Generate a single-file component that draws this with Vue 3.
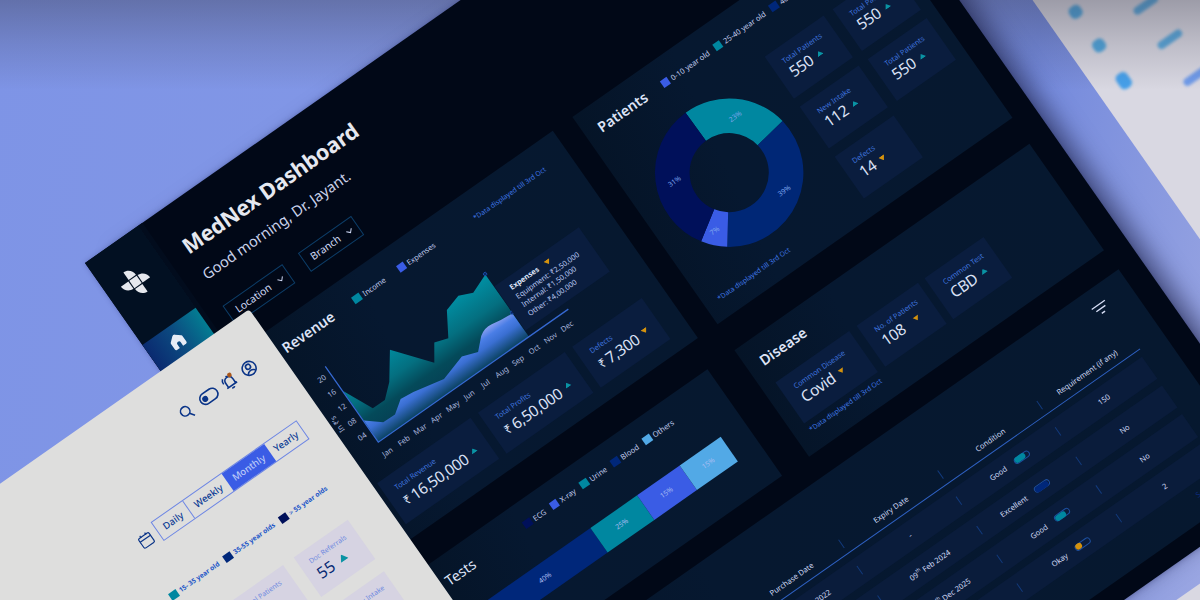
<script setup>
const dataNote = '*Data displayed till 3rd Oct'

const yTicks = ['20', '16', '12', '08', '04']
const months = ['Jan', 'Feb', 'Mar', 'Apr', 'May', 'Jun', 'Jul', 'Aug', 'Sep', 'Oct', 'Nov', 'Dec']

const revenueStats = [
  { label: 'Total Revenue', value: '16,50,000', trend: 'up', size: 'lg' },
  { label: 'Total Profits', value: '6,50,000', trend: 'up', size: 'md' },
  { label: 'Defects', value: '7,300', trend: 'down', size: 'sm' },
]

const patientLegend = [
  { label: '0-10 year old', color: 'blue' },
  { label: '25-40 year old', color: 'teal' },
  { label: '40-55 year old', color: 'royal' },
]

const patientStats = [
  { label: 'Total Patients', value: '550', trend: 'up' },
  { label: 'Total Patients', value: '550', trend: 'up' },
  { label: 'New Intake', value: '112', trend: 'up' },
  { label: 'Total Patients', value: '550', trend: 'up' },
  { label: 'Defects', value: '14', trend: 'down' },
]

const diseaseStats = [
  { label: 'Common Disease', value: 'Covid', trend: 'down', size: 'a' },
  { label: 'No. of Patients', value: '108', trend: 'down', size: 'b' },
  { label: 'Common Test', value: 'CBD', trend: 'up', size: 'c' },
]

const testLegend = [
  { label: 'ECG', color: 'navy' },
  { label: 'X-ray', color: 'blue' },
  { label: 'Urine', color: 'teal' },
  { label: 'Blood', color: 'royal' },
  { label: 'Others', color: 'sky' },
]

const testBar = [
  { value: '40%', width: 130.5, color: 'royal' },
  { value: '25%', width: 57, color: 'teal' },
  { value: '15%', width: 52.5, color: 'blue' },
  { value: '15%', width: 49.5, color: 'sky' },
]

const tableHead = ['Purchase Date', 'Expiry Date', 'Condition', 'Requirement (if any)']
const tableRows = [
  { bought: 'Mar 2022', day: '12', expiry: '-', expiryDay: '', condition: 'Good', level: 80, color: 'teal', need: '150' },
  { bought: '', day: '', expiry: 'Feb 2024', expiryDay: '09', condition: 'Excellent', level: 100, color: 'royal', need: 'No' },
  { bought: '', day: '', expiry: 'Dec 2025', expiryDay: '10', condition: 'Good', level: 80, color: 'teal', need: 'No' },
  { bought: '', day: '', expiry: '', expiryDay: '', condition: 'Okay', level: 45, color: 'amber', need: '2' },
]

// donut slices, degrees clockwise from the top
const slices = [
  { from: -1, to: 81, color: 'teal', label: '23%', x: 37.2, y: -42.7 },
  { from: 81, to: 216.5, color: 'royal', label: '39%', x: 34.7, y: 46.3 },
  { from: 216.5, to: 237.2, color: 'blue', label: '7%', x: -45.3, y: 39.1 },
  { from: 237.2, to: 359, color: 'navy', label: '31%', x: -49.8, y: -24.3 },
]

function point(r, deg) {
  const a = (deg * Math.PI) / 180
  return `${(r * Math.sin(a)).toFixed(2)} ${(-r * Math.cos(a)).toFixed(2)}`
}

function slicePath({ from, to }) {
  const outer = 74.2
  const inner = 39.6
  const large = to - from > 180 ? 1 : 0
  return `M${point(outer, from)}A${outer} ${outer} 0 ${large} 1 ${point(outer, to)}L${point(inner, to)}A${inner} ${inner} 0 ${large} 0 ${point(inner, from)}Z`
}

const ranges = ['Daily', 'Weekly', 'Monthly', 'Yearly']
const ageLegend = [
  { label: '15- 35 year old', color: 'teal' },
  { label: '35-55 year olds', color: 'royal' },
  { label: '> 55 year olds', color: 'navy' },
]
</script>

<template>
  <div class="scene">
    <div class="plane">
      <div class="sheet sheet--right">
        <div class="sheet__dots"><i></i><i></i><i></i></div>
        <div class="sheet__dashes"><i></i><i></i><i></i></div>
      </div>
      <div class="sheet sheet--bottom"></div>
    </div>
    <div class="shade"></div>

    <div class="plane">
      <div class="dashboard">
        <aside class="sidebar">
          <svg class="sidebar__logo" viewBox="-16 -16 32 32">
            <g fill="#e6e8ee">
              <rect x="-4.6" y="-4.6" width="9.2" height="9.2" />
              <path d="M-4.6-5.8V-15.2C0.5-15.200 4.600-11 4.600-5.800Z" />
              <path d="M5.800 4.600H15.200C15.200-0.500 11-4.600 5.800-4.600Z" />
              <path d="M4.600 5.800V15.200C-0.500 15.200-4.600 11-4.600 5.800Z" />
              <path d="M-5.800-4.600H-15.200C-15.200 0.500-11 4.600-5.800 4.600Z" />
            </g>
          </svg>
          <div class="sidebar__home">
            <svg viewBox="0 0 18 18" width="18" height="18">
              <path d="M7.500 2.200Q9 1 10.500 2.200L15.500 6.500Q16 7 16 8V14.500Q16 16 14.500 16H11V11.500Q11 9.800 9 9.800Q7 9.800 7 11.500V16H3.500Q2 16 2 14.500V8Q2 7 2.500 6.500Z" fill="#e6ebf5" />
            </svg>
          </div>
        </aside>

        <main class="main">
          <h1 class="title">MedNex Dashboard</h1>
          <p class="greeting">Good morning, Dr. Jayant.</p>
          <div class="filters">
            <div class="select">
              Location
              <svg viewBox="0 0 8 6" width="8" height="6"><path d="M1 1.200L4 4.400L7 1.200" /></svg>
            </div>
            <div class="select">
              Branch
              <svg viewBox="0 0 8 6" width="8" height="6"><path d="M1 1.200L4 4.400L7 1.200" /></svg>
            </div>
          </div>

          <div class="row row--top">
            <section class="card card--revenue">
              <header class="card__head">
                <h2>Revenue</h2>
                <ul class="legend legend--wide">
                  <li><i class="bg-teal"></i>Income</li>
                  <li><i class="bg-blue"></i>Expenses</li>
                </ul>
                <span class="note">{{ dataNote }}</span>
              </header>
              <div class="chart">
                <svg viewBox="98 200 361 140" width="361" height="140">
                  <defs>
                    <linearGradient id="income" x1="0" y1="0" x2="0" y2="1">
                      <stop offset="0" stop-color="#0090a4" />
                      <stop offset="0.4" stop-color="#046f80" />
                      <stop offset="0.65" stop-color="#044a5a" />
                      <stop offset="1" stop-color="#063a50" />
                    </linearGradient>
                    <linearGradient id="expense" x1="0" y1="0" x2="0" y2="1">
                      <stop offset="0" stop-color="#8aa0f0" />
                      <stop offset="0.25" stop-color="#4a7ee6" />
                      <stop offset="0.5" stop-color="#3a6fd2" />
                      <stop offset="1" stop-color="#0a4260" />
                    </linearGradient>
                  </defs>
                  <path
                    d="M138 253L152.500 284L167 284.300L181 272L200 246L229 282L240.500 265.500L254.500 270L269.500 246L287 241L301 247L321.400 239V315H138Z"
                    fill="url(#income)"
                  />
                  <path
                    d="M138 289L153 301.500L167 302L180.500 292.500L195 294L227.500 301L255 292.800L271 298.300L282.700 287Q290 282 298 283.500Q310 286 321.200 286.300V315H138Z"
                    fill="url(#expense)"
                  />
                  <path d="M137.500 222.500V315H369.500" fill="none" stroke="#3568d0" stroke-width="1.3" />
                  <circle cx="321.400" cy="238.500" r="1.700" class="dot" />
                  <circle cx="321.400" cy="285.500" r="1.700" class="dot" />
                  <g class="axis">
                    <text v-for="(t, i) in yTicks" :key="t" x="127.500" :y="233.300 + i * 17.600">{{ t }}</text>
                    <text v-for="(m, i) in months" :key="m" :x="139.500 + i * 19.900" y="331">{{ m }}</text>
                    <text transform="translate(117 277) rotate(-90)">In ₹’s</text>
                  </g>
                </svg>
                <div class="tooltip">
                  <b>Expenses <i class="arrow arrow--down"></i></b>
                  <span>Equipment: ₹2,50,000</span>
                  <span>Internal: ₹1,50,000</span>
                  <span>Other: ₹4,00,000</span>
                </div>
              </div>
              <div class="stats stats--revenue">
                <div v-for="s in revenueStats" :key="s.label" class="stat" :class="'stat--' + s.size">
                  <span class="stat__label">{{ s.label }}</span>
                  <span class="stat__value"><small>₹</small>{{ s.value }}<i class="arrow" :class="'arrow--' + s.trend"></i></span>
                </div>
              </div>
            </section>

            <section class="card card--patients">
              <header class="card__head">
                <h2>Patients</h2>
                <ul class="legend legend--ages">
                  <li v-for="l in patientLegend" :key="l.label"><i :class="'bg-' + l.color"></i>{{ l.label }}</li>
                </ul>
              </header>
              <div class="patients">
                <svg class="donut" viewBox="-74.500 -74.500 149 149" width="149" height="149">
                  <path v-for="s in slices" :key="s.label" :d="slicePath(s)" :class="'fill-' + s.color" />
                  <text v-for="s in slices" :key="s.label" :x="s.x" :y="s.y + 2.500">{{ s.label }}</text>
                </svg>
                <div class="stats stats--patients">
                  <div v-for="(s, i) in patientStats" :key="i" class="stat">
                    <span class="stat__label">{{ s.label }}</span>
                    <span class="stat__value">{{ s.value }}<i class="arrow" :class="'arrow--' + s.trend"></i></span>
                  </div>
                </div>
              </div>
              <p class="note note--patients">{{ dataNote }}</p>
            </section>
          </div>

          <div class="row row--middle">
            <section class="card card--tests">
              <header class="card__head">
                <h2>Tests</h2>
                <ul class="legend legend--tests">
                  <li v-for="l in testLegend" :key="l.label"><i :class="'bg-' + l.color"></i>{{ l.label }}</li>
                </ul>
              </header>
              <div class="bar">
                <span v-for="(b, i) in testBar" :key="i" :class="'bg-' + b.color" :style="{ width: b.width + 'px' }">{{ b.value }}</span>
              </div>
            </section>

            <section class="card card--disease">
              <header class="card__head">
                <h2>Disease</h2>
              </header>
              <div class="stats stats--disease">
                <div v-for="s in diseaseStats" :key="s.label" class="stat" :class="'stat--' + s.size">
                  <span class="stat__label">{{ s.label }}</span>
                  <span class="stat__value">{{ s.value }}<i class="arrow" :class="'arrow--' + s.trend"></i></span>
                </div>
              </div>
              <p class="note note--disease">{{ dataNote }}</p>
            </section>
          </div>

          <section class="card card--table">
            <svg class="sort" viewBox="0 0 18 12" width="18" height="12">
              <path d="M1 1.500H17M3.500 6H14.500M7 10.500H11" />
            </svg>
            <div class="table__row table__row--head">
              <span v-for="h in tableHead" :key="h" class="cell">{{ h }}</span>
            </div>
            <div v-for="(r, i) in tableRows" :key="i" class="table__row">
              <span class="cell"><template v-if="r.bought">{{ r.day }}<sup>th</sup>&nbsp;{{ r.bought }}</template></span>
              <span class="cell">{{ r.expiryDay }}<sup v-if="r.expiryDay">th</sup>&nbsp;{{ r.expiry }}</span>
              <span class="cell cell--condition">
                <em>{{ r.condition }}</em>
                <span class="pill"><i :class="'bg-' + r.color" :style="{ width: r.level + '%' }"></i></span>
              </span>
              <span class="cell">{{ r.need }}</span>
            </div>
            <a class="more">See all</a>
          </section>
        </main>
      </div>

      <div class="panel">
        <div class="panel__icons">
          <svg viewBox="0 0 18 18" width="18" height="18">
            <circle cx="7" cy="8" r="4.700" />
            <path d="M9.500 12L12.800 16.800" />
          </svg>
          <svg viewBox="0 0 22 18" width="22" height="18">
            <rect x="1.200" y="3.500" width="19.600" height="11.500" rx="5.700" />
            <circle cx="6.500" cy="9.300" r="2.200" class="solid" />
          </svg>
          <svg viewBox="0 0 18 18" width="18" height="18">
            <path d="M2.500 13.500H14.500M4.200 13.500V8.500C4.200 5.500 6 4 8.500 4S12.800 5.500 12.800 8.500V13.500M8.500 4V2.200M7 15.700Q8.500 17 10 15.700M2 8Q2 4.500 4 3" />
            <circle cx="12" cy="3.600" r="2.300" class="alert" />
          </svg>
          <svg viewBox="0 0 18 18" width="18" height="18">
            <circle cx="8" cy="9.500" r="7" />
            <circle cx="8" cy="7.500" r="2.500" />
            <path d="M3.500 14.300Q8 9.500 12.500 14.300" />
          </svg>
        </div>
        <div class="panel__range">
          <svg viewBox="0 0 16 16" width="16" height="16">
            <rect x="1" y="2.800" width="12.500" height="11.500" rx="1.500" />
            <path d="M1 6.500H13.500M4.300 1V3.500M10.200 1V3.500" />
          </svg>
          <div class="tabs">
            <span v-for="r in ranges" :key="r" :class="['tab', 'tab--' + r.toLowerCase()]">{{ r }}</span>
          </div>
        </div>
        <ul class="legend legend--panel">
          <li v-for="l in ageLegend" :key="l.label"><i :class="'bg-' + l.color"></i>{{ l.label }}</li>
        </ul>
        <div class="tiles">
          <div class="tile"><span>Total Patients</span><b>55<i class="arrow arrow--up"></i></b></div>
          <div class="tile"><span>Doc Referrals</span><b>55<i class="arrow arrow--up"></i></b></div>
          <div class="tile tile--intake"><span>New Intake</span></div>
        </div>
      </div>
    </div>
  </div>
</template>

<style>
body {
  margin: 0;
}
</style>

<style scoped>
.scene {
  position: relative;
  width: 1200px;
  height: 600px;
  overflow: hidden;
  background: linear-gradient(100deg, #7e94e6 0%, #8297e6 35%, #7389dc 80%, #9aa6e2 100%);
  font-family: "Noto Sans", "Open Sans", sans-serif;
  color: #cfd8f4;
}

/* darkening along the top edge, behind the windows */
.shade {
  position: absolute;
  inset: 0 0 auto;
  height: 90px;
  background: linear-gradient(rgba(50, 50, 66, 0.36), rgba(50, 50, 66, 0.16) 50%, rgba(50, 50, 66, 0));
}

.plane {
  position: absolute;
  left: 85px;
  top: 263px;
  width: 0;
  height: 0;
  transform: rotate(-35deg);
}

h1,
h2,
p,
ul {
  margin: 0;
  padding: 0;
  list-style: none;
}

/* sheets behind the dashboard */
.sheet {
  position: absolute;
  background: #d9d8e2;
}

.sheet--right {
  left: 927px;
  top: 200px;
  width: 500px;
  height: 600px;
  display: flex;
}

.sheet--bottom {
  left: 700px;
  top: 902px;
  width: 400px;
  height: 200px;
}

.sheet__dots,
.sheet__dashes {
  display: flex;
  flex-direction: column;
  gap: 28px;
  padding: 156px 0 0 22px;
  filter: blur(1.5px);
}

.sheet__dots i {
  width: 13px;
  height: 13px;
  border-radius: 5px;
  background: #4fa5dc;
}

.sheet__dots i:last-child {
  height: 17px;
  background: #46a0ea;
}

.sheet__dashes {
  gap: 34px;
  padding: 193px 0 0 41px;
}

.sheet__dashes i {
  width: 28px;
  height: 8px;
  border-radius: 4px;
  background: #5aa8dc;
}

.sheet__dashes i:last-child {
  margin-top: 3px;
  background: #6f9bea;
}

/* dashboard window */
.dashboard {
  position: absolute;
  left: 0;
  top: 0;
  width: 867px;
  height: 872px;
  display: flex;
  background: #010817;
  box-shadow: 20px 4px 22px -10px rgba(30, 34, 70, 0.6), 0 0 5px rgba(40, 46, 110, 0.35);
}

.sidebar {
  width: 70px;
  box-sizing: border-box;
  padding-top: 29px;
  background: linear-gradient(90deg, #021022 0 65px, #020c1d 65px);
}

.sidebar__logo {
  display: block;
  width: 31px;
  height: 31px;
  margin-left: 15px;
}

.sidebar__home {
  width: 65px;
  height: 34px;
  margin-top: 40px;
  display: flex;
  align-items: center;
  justify-content: center;
  box-sizing: border-box;
  padding-right: 4px;
  background: linear-gradient(90deg, #0a2a70, #0c4a80 50%, #037c92);
}

.main {
  flex: 1;
  padding: 30px 24px 0 0;
}

.title {
  margin-left: 20px;
  font-size: 21.6px;
  line-height: 30px;
  font-weight: 700;
  letter-spacing: -0.15px;
  color: #e6e8f0;
  white-space: nowrap;
}

.greeting {
  margin: 8px 0 0 20px;
  font-size: 14.7px;
  line-height: 20px;
  color: #c9d1ea;
}

.filters {
  display: flex;
  gap: 19px;
  margin: 26px 0 23px 18px;
}

.select {
  display: flex;
  align-items: center;
  gap: 8px;
  height: 21px;
  padding: 0 5px 0 8px;
  border: 1px solid #0c3c66;
  font-size: 10.4px;
  line-height: 21px;
}

.select svg {
  fill: none;
  stroke: #cfd8f4;
  stroke-width: 1;
}

.row {
  display: flex;
  margin-left: 28px;
}

.row--top {
  height: 252.5px;
  gap: 24px;
}

.row--middle {
  height: 130px;
  margin-top: 31.5px;
  gap: 33.5px;
}

.card {
  flex: none;
  box-sizing: border-box;
  background: linear-gradient(100deg, #051427, #061830 30%, #06182f);
}

.card--revenue {
  width: 361px;
}

.card--patients,
.card--disease {
  width: 360px;
}

.card--tests {
  width: 350.5px;
}

.card__head {
  display: flex;
  align-items: center;
  padding: 15px 0 0 15px;
  height: 20px;
}

.card__head h2 {
  font-size: 14.4px;
  line-height: 20px;
  font-weight: 600;
  color: #dde3f6;
}

.card--tests h2 {
  font-weight: 400;
}

.legend {
  display: flex;
  font-size: 7.5px;
  line-height: 10px;
  color: #c3cdee;
  white-space: nowrap;
}

.legend li {
  display: flex;
  align-items: center;
  gap: 3px;
}

.legend i {
  width: 8.5px;
  height: 8px;
}

.legend--wide {
  gap: 16px;
  margin-left: 25px;
}

.legend--ages {
  gap: 7px;
  margin-left: 19px;
}

.legend--tests {
  gap: 7px;
  margin: -4px 0 0 62px;
}

.note {
  font-size: 6.9px;
  line-height: 10px;
  color: #3f76e4;
  white-space: nowrap;
}

.card--revenue .note {
  margin: 3px 28px 0 auto;
}

.note--patients {
  margin: -6px 0 0 15px;
}

.note--disease {
  margin: 4px 0 0 16px;
}

.bg-teal {
  background: #0087a0;
}

.bg-blue {
  background: #3a5ce5;
}

.bg-navy {
  background: #00105a;
}

.bg-royal {
  background: #00277a;
}

.bg-sky {
  background: #52a9e6;
}

.bg-amber {
  background: #d4920e;
}

.fill-teal {
  fill: #0087a0;
}

.fill-royal {
  fill: #002776;
}

.fill-blue {
  fill: #3a5ce5;
}

.fill-navy {
  fill: #00105a;
}

/* revenue chart */
.chart {
  position: relative;
  height: 140px;
  margin-top: 5px;
}

.chart svg {
  display: block;
}

.axis text {
  font-size: 7.6px;
  text-anchor: middle;
  fill: #a9b6de;
}

.dot {
  fill: #0a2a66;
  stroke: #1f52b8;
  stroke-width: 0.8;
}

.tooltip {
  position: absolute;
  left: 224px;
  top: 54px;
  width: 103px;
  height: 54px;
  box-sizing: border-box;
  padding: 4px 0 0 12px;
  background: #0a1d3e;
  display: flex;
  flex-direction: column;
  font-size: 7.4px;
  line-height: 10.4px;
  color: #b9c6f0;
  white-space: nowrap;
}

.tooltip b {
  font-weight: 700;
  color: #dde3f6;
  line-height: 12px;
}

.tooltip .arrow {
  margin-left: 6px;
}

.arrow {
  display: inline-block;
  width: 7px;
  height: 5px;
  background: #0a93a4;
  clip-path: polygon(50% 0, 100% 100%, 0 100%);
}

.arrow--down {
  background: #d4920e;
  clip-path: polygon(0 0, 100% 0, 50% 100%);
}

.stats {
  display: flex;
}

.stat {
  box-sizing: border-box;
  padding: 9px 0 0 12px;
  background: #0a1d3e;
  display: flex;
  flex-direction: column;
  white-space: nowrap;
}

.stat__label {
  font-size: 7.4px;
  line-height: 10px;
  color: #3f73dd;
}

.stat__value {
  display: flex;
  align-items: center;
  margin-top: 1px;
  font-size: 15.5px;
  line-height: 17px;
  letter-spacing: -0.4px;
  color: #dbe1f5;
}

.stat__value small {
  font-size: 12px;
  margin-right: 3px;
}

.stat__value .arrow {
  margin: 0 0 0 6px;
}

.stats--revenue {
  gap: 9.5px;
  margin: 8px 0 0 15px;
}

.stats--revenue .stat {
  height: 49.5px;
}

.stats--revenue .stat__value {
  margin-top: 2.5px;
}

.stats--revenue .arrow {
  margin-top: -3px;
}

.stat--lg {
  width: 113.5px;
}

.stat--md {
  width: 105.5px;
}

.stat--sm {
  width: 84.5px;
}

.patients {
  display: flex;
  gap: 21px;
  margin: 26px 0 0 22px;
}

.donut text {
  font-size: 7px;
  text-anchor: middle;
  fill: #7fa6ee;
}

.stats--patients {
  display: grid;
  grid-template-columns: 72px 72px;
  grid-auto-rows: 51px;
  gap: 10px 10.5px;
}

.stats--disease {
  gap: 8.5px;
  margin: 14.5px 0 0 15px;
}

.stats--disease .stat {
  height: 50.5px;
  padding-left: 13px;
}

.stat--a {
  width: 90px;
}

.stat--b {
  width: 75px;
}

.stats--disease .stat--b .arrow {
  margin-left: 12px;
}

.stat--c {
  width: 72px;
}

.bar {
  display: flex;
  height: 30px;
  margin: 27.5px 0 0 33px;
}

.bar span {
  display: flex;
  align-items: center;
  justify-content: center;
  font-size: 7px;
  color: #a9bdf2;
}

/* equipment table */
.card--table {
  width: 745px;
  height: 254px;
  margin: 24px 0 0 28px;
  padding: 16px 0 0 14px;
  font-size: 7.6px;
}

.sort {
  display: block;
  margin: 0 0 0 685px;
  fill: none;
  stroke: #d5dcf4;
  stroke-width: 1.4;
}

.table__row {
  display: grid;
  grid-template-columns: 121.3px 121.3px 121.3px 1fr;
  width: 699.5px;
  height: 27.5px;
  box-sizing: border-box;
  padding-left: 225.3px;
  margin-bottom: 7.8px;
  align-items: center;
  background: #0a1c3b;
}

.table__row--head {
  width: 703px;
  height: 21.5px;
  margin: 28px 0 7px;
  background: none;
  border-bottom: 1.5px solid #2f62c4;
}

.cell {
  display: flex;
  align-items: center;
  justify-content: center;
  height: 10px;
  line-height: 10px;
  border-right: 1px solid #123a7c;
  white-space: nowrap;
}

.cell:last-child {
  border-right: 0;
}

.cell sup {
  font-size: 5px;
  line-height: 5px;
  align-self: flex-start;
}

.cell--condition {
  justify-content: flex-end;
}

.cell--condition em {
  font-style: normal;
}

.pill {
  width: 15.5px;
  height: 5px;
  margin: 0 35.5px 0 10px;
  border: 1px solid #1d4fa0;
  border-radius: 4px;
  display: flex;
}

.pill i {
  height: 6px;
  margin: -0.5px;
  border-radius: 3px;
}

.more {
  display: block;
  margin-left: 665px;
  font-size: 7.5px;
  line-height: 8px;
  color: #0c2c80;
}

/* light panel in front */
.panel {
  position: absolute;
  left: -400px;
  top: 132px;
  width: 507.5px;
  height: 560px;
  border-radius: 4px;
  background: #dededd;
  color: #0a3a94;
}

.panel svg {
  fill: none;
  stroke: #0a3488;
  stroke-width: 1.6;
}

.panel__icons {
  display: flex;
  gap: 6px;
  margin: 39px 0 0 390px;
}

.panel .solid {
  fill: #0a3488;
}

.panel .alert {
  fill: #a8561a;
  stroke: none;
}

.panel__range {
  display: flex;
  align-items: center;
  gap: 5px;
  margin: 61px 0 0 284px;
}

.panel__range svg {
  stroke-width: 1.2;
}

.tabs {
  display: flex;
  height: 21px;
  border: 1px solid #6d86e4;
  font-size: 9.6px;
  line-height: 21px;
  font-weight: 500;
}

.tab {
  text-align: center;
}

.tab--daily {
  width: 37px;
  border-right: 1px solid #6d86e4;
}

.tab--weekly {
  width: 47px;
}

.tab--monthly {
  width: 51.5px;
  background: #3a5ce5;
  color: #b9c8f8;
}

.tab--yearly {
  width: 39.5px;
}

.legend--panel {
  gap: 7px;
  margin: 45px 0 0 278px;
  font-size: 6.7px;
  font-weight: 700;
  color: #1c56c8;
}

.tiles {
  display: grid;
  grid-template-columns: 66.5px 66.5px;
  grid-auto-rows: 47.5px;
  gap: 15px 13px;
  margin: 33px 0 0 322px;
}

.tile {
  box-sizing: border-box;
  padding: 8px 0 0 11px;
  background: #d6d3e2;
  display: flex;
  flex-direction: column;
  font-size: 7px;
  line-height: 10px;
  color: #6f8ae0;
  white-space: nowrap;
}

.tile b {
  display: flex;
  align-items: center;
  font-size: 16px;
  line-height: 20px;
  font-weight: 400;
  color: #082a74;
}

.tile .arrow {
  width: 9px;
  height: 7px;
  margin-left: 7px;
}

.tile--intake {
  grid-column: 2;
  padding-left: 20px;
}
</style>
